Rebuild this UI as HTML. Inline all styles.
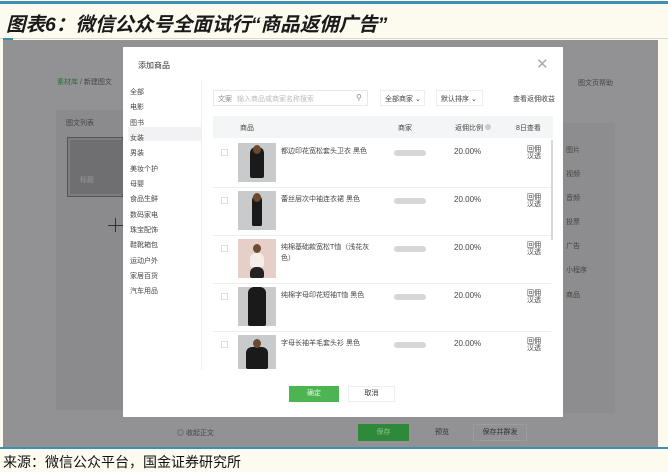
<!DOCTYPE html>
<html><head><meta charset="utf-8"><style>
*{margin:0;padding:0;box-sizing:border-box}
body{width:668px;height:472px;background:#fdfaf0;position:relative;overflow:hidden;font-family:"Liberation Sans","Noto Sans CJK SC",sans-serif;color:#333}
.a{position:absolute;white-space:nowrap}
.s{font-size:7px;color:#444}
.g{background:#929294}
.img{position:absolute;width:38px;height:39px;background:#c9cacc}
.fig{position:absolute;left:12px;top:4px;width:14px;height:31px;background:#1a1a1a;border-radius:6px 6px 2px 2px}
.head{position:absolute;left:15px;top:2px;width:8px;height:9px;border-radius:50%;background:#6b4a30}
.blur{position:absolute;width:32px;height:6px;background:#d6d6d8;border-radius:3px}
.cb{position:absolute;width:7px;height:7px;border:1px solid #ddd}
</style></head><body>
<div class="a" style="left:0;top:1px;width:668px;height:3px;background:#3e8fb0"></div>
<div class="a" style="left:6px;top:8px;font-size:19.5px;font-weight:bold;font-style:italic;color:#1a1a1a">图表6：微信公众号全面试行“商品返佣广告”</div>
<div class="a" style="left:0;top:38px;width:668px;height:1px;background:#d9d9d2"></div>
<div class="a" style="left:3px;top:38px;width:10px;height:2px;background:#3e8fb0"></div>
<div class="a g" style="left:3px;top:40px;width:655px;height:407px"></div>
<div class="a" style="left:0;top:447px;width:668px;height:2px;background:#3e8fb0"></div>
<div class="a" style="left:3px;top:452px;font-size:14px;color:#111">来源：微信公众平台，国金证券研究所</div>

<div class="a s" style="left:57px;top:77px;color:#2c6e34">素材库 <span style="color:#444">/ 新建图文</span></div>
<div class="a s" style="left:578px;top:78px">图文页帮助</div>
<div class="a" style="left:56px;top:110px;width:67px;height:300px;background:#8b8b8d"></div>
<div class="a s" style="left:66px;top:118px">图文列表</div>
<div class="a" style="left:67px;top:137px;width:56px;height:60px;border:1px solid #555;background:#7d7d7f"></div>
<div class="a" style="left:70px;top:140px;width:53px;height:54px;background:#6f6f71"></div>
<div class="a s" style="left:80px;top:175px;color:#999">标题</div>
<div class="a" style="left:108px;top:225px;width:15px;height:1px;background:#333"></div>
<div class="a" style="left:115px;top:218px;width:1px;height:14px;background:#333"></div>
<div class="a" style="left:563px;top:123px;width:52px;height:290px;background:#8d8d8f"></div>
<div class="a s" style="left:566px;top:145px">图片</div>
<div class="a s" style="left:566px;top:169px">视频</div>
<div class="a s" style="left:566px;top:193px">音频</div>
<div class="a s" style="left:566px;top:217px">投票</div>
<div class="a s" style="left:566px;top:241px">广告</div>
<div class="a s" style="left:566px;top:265px">小程序</div>
<div class="a s" style="left:566px;top:290px">商品</div>
<div class="a s" style="left:177px;top:428px">◎ 收起正文</div>
<div class="a" style="left:358px;top:424px;width:51px;height:17px;background:#2e8a3a;color:#8cc493;font-size:7px;text-align:center;line-height:17px">保存</div>
<div class="a" style="left:420px;top:424px;width:44px;height:17px;font-size:7px;text-align:center;line-height:17px">预览</div>
<div class="a" style="left:473px;top:424px;width:54px;height:17px;border:1px solid #9c9c9e;font-size:7px;text-align:center;line-height:15px">保存并群发</div>

<div class="a" style="left:123px;top:47px;width:440px;height:370px;background:#fff"></div>
<div class="a" style="left:138px;top:60px;font-size:8px;color:#333">添加商品</div>
<div class="a" style="left:536px;top:55px;font-size:15px;color:#aaa;font-weight:lighter">✕</div>
<div class="a" style="left:201px;top:80px;width:1px;height:290px;background:#eee"></div>
<div class="a" style="left:128px;top:127px;width:73px;height:14px;background:#f2f2f4"></div>
<div class="a s" style="left:130px;top:85px;line-height:15.35px">全部<br>电影<br>图书<br>女装<br>男装<br>美妆个护<br>母婴<br>食品生鲜<br>数码家电<br>珠宝配饰<br>鞋靴箱包<br>运动户外<br>家居百货<br>汽车用品</div>

<div class="a" style="left:213px;top:90px;width:155px;height:16px;border:1px solid #e8e8e8"></div>
<div class="a s" style="left:218px;top:94px;color:#888">文案 <span style="color:#bbb;margin-left:3px">输入商品或商家名称搜索</span></div>
<div class="a" style="left:356px;top:93px;font-size:8px;color:#888">⚲</div>
<div class="a" style="left:380px;top:90px;width:45px;height:16px;border:1px solid #eee"></div>
<div class="a s" style="left:385px;top:94px">全部商家 ⌄</div>
<div class="a" style="left:436px;top:90px;width:47px;height:16px;border:1px solid #eee"></div>
<div class="a s" style="left:441px;top:94px">默认排序 ⌄</div>
<div class="a s" style="left:513px;top:94px">查看返佣收益</div>

<div class="a" style="left:213px;top:116px;width:340px;height:22px;background:#f4f5f7"></div>
<div class="a s" style="left:240px;top:123px">商品</div>
<div class="a s" style="left:398px;top:123px">商家</div>
<div class="a s" style="left:455px;top:123px">返佣比例 <span style="display:inline-block;width:6px;height:6px;border-radius:50%;background:#ccc"></span></div>
<div class="a s" style="left:516px;top:123px">8日查看</div>
<div class="a" style="left:551px;top:140px;width:2px;height:100px;background:#d8d8d8"></div>

<div class="a" style="left:213px;top:187px;width:338px;height:1px;background:#eee"></div>
<div class="a" style="left:213px;top:235px;width:338px;height:1px;background:#eee"></div>
<div class="a" style="left:213px;top:283px;width:338px;height:1px;background:#eee"></div>
<div class="a" style="left:213px;top:331px;width:338px;height:1px;background:#eee"></div>

<div class="cb" style="left:221px;top:149px"></div>
<div class="img" style="left:238px;top:143px"><div class="fig"></div><div class="head"></div></div>
<div class="a s" style="left:281px;top:146px">都边印花宽松套头卫衣 黑色</div>
<div class="blur" style="left:394px;top:150px"></div>
<div class="a s" style="left:454px;top:147px;font-size:8px">20.00%</div>
<div class="a s" style="left:527px;top:146px;line-height:7px">回佣<br>汉透</div>

<div class="cb" style="left:221px;top:197px"></div>
<div class="img" style="left:238px;top:191px"><div class="fig" style="width:10px;left:14px"></div><div class="head"></div></div>
<div class="a s" style="left:281px;top:194px">蕾丝层次中袖连衣裙 黑色</div>
<div class="blur" style="left:394px;top:198px"></div>
<div class="a s" style="left:454px;top:195px;font-size:8px">20.00%</div>
<div class="a s" style="left:527px;top:194px;line-height:7px">回佣<br>汉透</div>

<div class="cb" style="left:221px;top:245px"></div>
<div class="img" style="left:238px;top:239px;background:#e6cfc8"><div class="fig" style="background:#f4eee8;top:14px;height:14px"></div><div class="head" style="top:5px"></div><div class="fig" style="top:28px;height:11px;background:#222"></div></div>
<div class="a s" style="left:281px;top:242px;line-height:11px">纯棉基础款宽松T恤（浅花灰<br>色）</div>
<div class="blur" style="left:394px;top:246px"></div>
<div class="a s" style="left:454px;top:243px;font-size:8px">20.00%</div>
<div class="a s" style="left:527px;top:242px;line-height:7px">回佣<br>汉透</div>

<div class="cb" style="left:221px;top:293px"></div>
<div class="img" style="left:238px;top:287px"><div class="fig" style="width:18px;left:10px;top:0;height:39px"></div></div>
<div class="a s" style="left:281px;top:290px">纯棉字母印花短袖T恤 黑色</div>
<div class="blur" style="left:394px;top:294px"></div>
<div class="a s" style="left:454px;top:291px;font-size:8px">20.00%</div>
<div class="a s" style="left:527px;top:290px;line-height:7px">回佣<br>汉透</div>

<div class="cb" style="left:221px;top:341px"></div>
<div class="img" style="left:238px;top:335px;height:34px"><div class="fig" style="top:12px;width:22px;left:8px;height:22px"></div><div class="head" style="top:4px"></div></div>
<div class="a s" style="left:281px;top:338px">字母长袖羊毛套头衫 黑色</div>
<div class="blur" style="left:394px;top:342px"></div>
<div class="a s" style="left:454px;top:339px;font-size:8px">20.00%</div>
<div class="a s" style="left:527px;top:338px;line-height:7px">回佣<br>汉透</div>

<div class="a" style="left:289px;top:386px;width:50px;height:16px;background:#4cb551;color:#e8f5e9;font-size:7px;text-align:center;line-height:16px">确定</div>
<div class="a" style="left:348px;top:386px;width:47px;height:16px;border:1px solid #eee;font-size:7px;text-align:center;line-height:14px">取消</div>
</body></html>
